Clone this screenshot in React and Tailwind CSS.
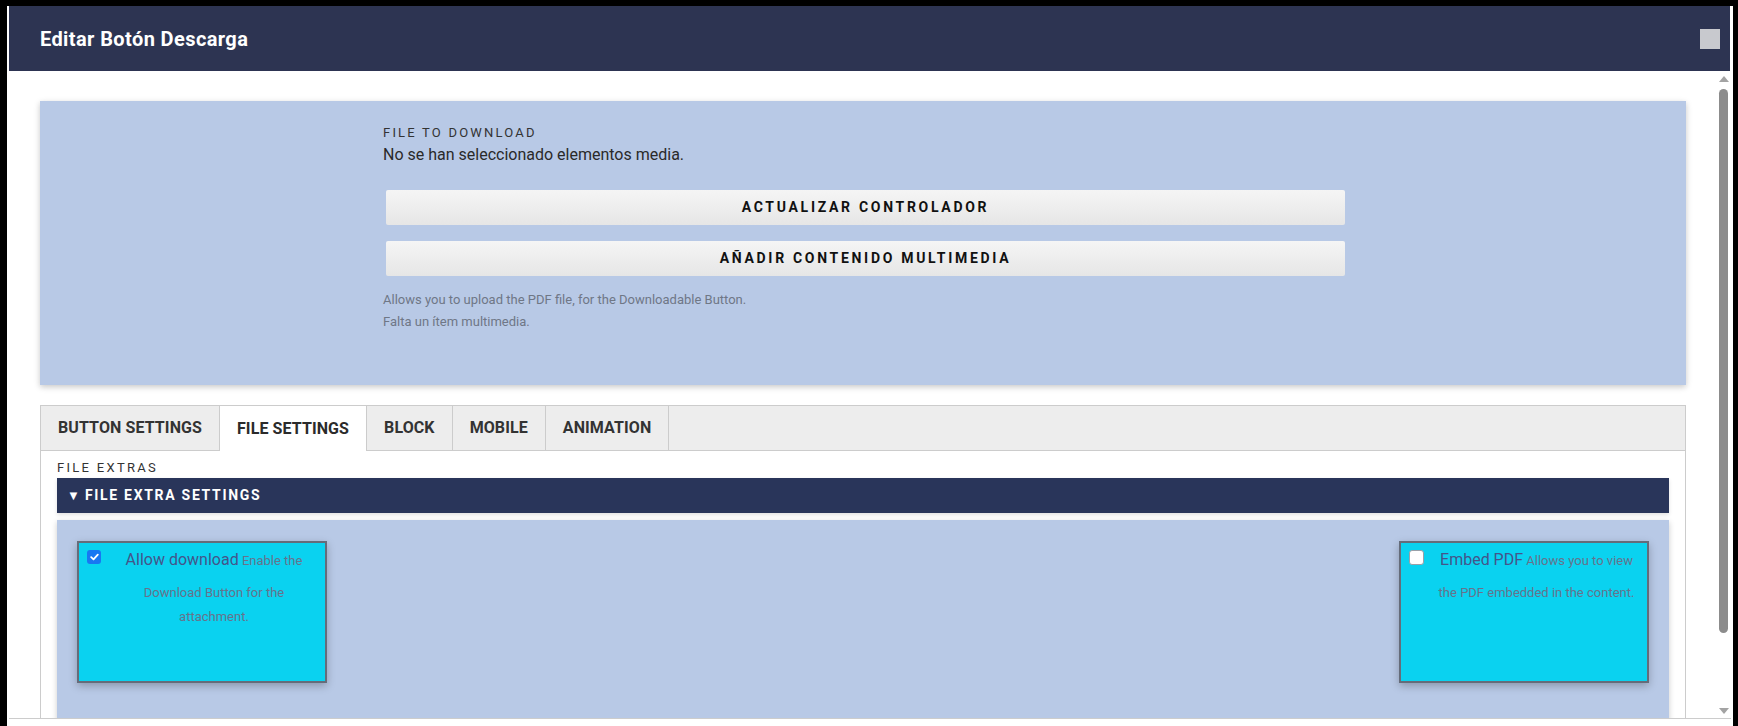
import React from "react";

const font = { fontFamily: "Roboto, 'Noto Sans', sans-serif" };

function Check({ checked }) {
  if (checked) {
    return (
      <div className="w-[14px] h-[14px] shrink-0 rounded-[3px] bg-[#1877f2] flex items-center justify-center">
        <svg width="9" height="8" viewBox="0 0 9 8">
          <path d="M1.2 4.2 L3.5 6.3 L7.8 1.6" fill="none" stroke="white" strokeWidth="1.8" strokeLinecap="round" strokeLinejoin="round" />
        </svg>
      </div>
    );
  }
  return <div className="w-[15px] h-[15px] shrink-0 rounded-[3px] bg-white border border-[#9aa0a8]" />;
}

function Card({ checked, label, desc }) {
  return (
    <div className="w-[250px] h-[142px] border-2 border-[#656c7a] bg-[#0ad2f0] shadow-[0_3px_8px_rgba(0,0,0,0.25)] flex pt-[7px] pl-[8px]">
      <Check checked={checked} />
      <div className="flex-1 ml-[9px] mr-[7px] -mt-[2px] text-center text-[13px] leading-[24px] text-[#66738c]">
        <span className="inline-block mb-[9px] text-[16px] leading-[24px] text-[#44558a]">{label}</span> {desc}
      </div>
    </div>
  );
}

export default function App() {
  const tabs = ["BUTTON SETTINGS", "FILE SETTINGS", "BLOCK", "MOBILE", "ANIMATION"];
  return (
    <div style={font} className="w-[1738px] h-[726px] bg-black pl-[7px] pr-[5px] pt-[6px] overflow-hidden">
      <div className="h-[720px] bg-white flex flex-col px-[2px]">
        {/* header */}
        <div className="h-[65px] shrink-0 bg-[#2d3452] flex items-center justify-between pl-[31px] pr-[10px] mr-[1px]">
          <div className="text-white text-[20px] font-bold tracking-[0.4px]">Editar Botón Descarga</div>
          <div className="w-[20px] h-[20px] bg-[#c8c9ce]" />
        </div>
        {/* body */}
        <div className="h-[647px] shrink-0 flex overflow-hidden">
          <div className="flex-1 overflow-hidden px-[31px] pt-[30px]">
            {/* file panel */}
            <div className="h-[284px] bg-[#b8c9e6] shadow-[0_2px_6px_rgba(0,0,0,0.22)] pl-[343px] pt-[22px]">
              <div className="text-[13px] leading-[20px] tracking-[2.2px] text-[#333]">FILE TO DOWNLOAD</div>
              <div className="text-[16px] leading-[24px] text-[#2a2a2a]">No se han seleccionado elementos media.</div>
              <div className="ml-[3px] w-[959px] mt-[23px] flex flex-col gap-[16px]">
                <div className="h-[35px] rounded-[2px] bg-gradient-to-b from-[#f5f5f5] to-[#e6e6e6] flex items-center justify-center text-[14px] font-bold tracking-[2.7px] text-[#111]">
                  ACTUALIZAR CONTROLADOR
                </div>
                <div className="h-[35px] rounded-[2px] bg-gradient-to-b from-[#f5f5f5] to-[#e6e6e6] flex items-center justify-center text-[14px] font-bold tracking-[2.7px] text-[#111]">
                  AÑADIR CONTENIDO MULTIMEDIA
                </div>
              </div>
              <div className="mt-[13px] text-[13px] leading-[22px] text-[#6f7786]">
                Allows you to upload the PDF file, for the Downloadable Button.
              </div>
              <div className="text-[13px] leading-[22px] text-[#6f7786]">Falta un ítem multimedia.</div>
            </div>
            {/* tabs */}
            <div className="mt-[20px] border border-[#cccccc]">
              <div className="h-[45px] bg-[#ededed] flex border-b border-[#cccccc]">
                {tabs.map((t, i) => (
                  <div
                    key={t}
                    className={
                      i === 1
                        ? "h-[45px] px-[17px] flex items-center border-r border-[#cccccc] bg-white text-[16px] font-bold tracking-[0.1px] text-[#2b2b2b]"
                        : "h-[44px] px-[17px] flex items-center border-r border-[#cccccc] text-[16px] font-bold tracking-[0.1px] text-[#333]"
                    }
                  >
                    {t}
                  </div>
                ))}
              </div>
              <div className="px-[16px] pt-[7px]">
                <div className="text-[13px] leading-[20px] tracking-[2.3px] text-[#333]">FILE EXTRAS</div>
                <div className="h-[35px] bg-[#29355a] flex items-center pl-[10px] text-white text-[14px] font-bold tracking-[1.7px] shadow-[0_2px_4px_rgba(0,0,0,0.12)]">
                  <span className="text-[13px] mr-[5px] tracking-normal">▼</span>FILE EXTRA SETTINGS
                </div>
                <div className="mt-[7px] h-[250px] bg-[#b8c9e6] shadow-[0_2px_6px_rgba(0,0,0,0.2)] px-[20px] pt-[21px] flex justify-between items-start">
                  <Card checked label="Allow download" desc="Enable the Download Button for the attachment." />
                  <Card checked={false} label="Embed PDF" desc="Allows you to view the PDF embedded in the content." />
                </div>
              </div>
            </div>
          </div>
          {/* scrollbar */}
          <div className="w-[14px] shrink-0 bg-white flex flex-col items-start pl-[2px] pt-[5px] pb-[4px]">
            <div className="w-[9px] flex justify-center">
              <div className="w-0 h-0 border-l-[5px] border-r-[5px] border-b-[6px] border-l-transparent border-r-transparent border-b-[#a3a3a3]" />
            </div>
            <div className="mt-[7px] w-[9px] h-[544px] rounded-full bg-[#8c8c8c]" />
            <div className="flex-1" />
            <div className="w-[9px] flex justify-center">
              <div className="w-0 h-0 border-l-[5px] border-r-[5px] border-t-[6px] border-l-transparent border-r-transparent border-t-[#a3a3a3]" />
            </div>
          </div>
        </div>
        <div className="flex-1 border-t border-[#cccccc]" />
      </div>
    </div>
  );
}
